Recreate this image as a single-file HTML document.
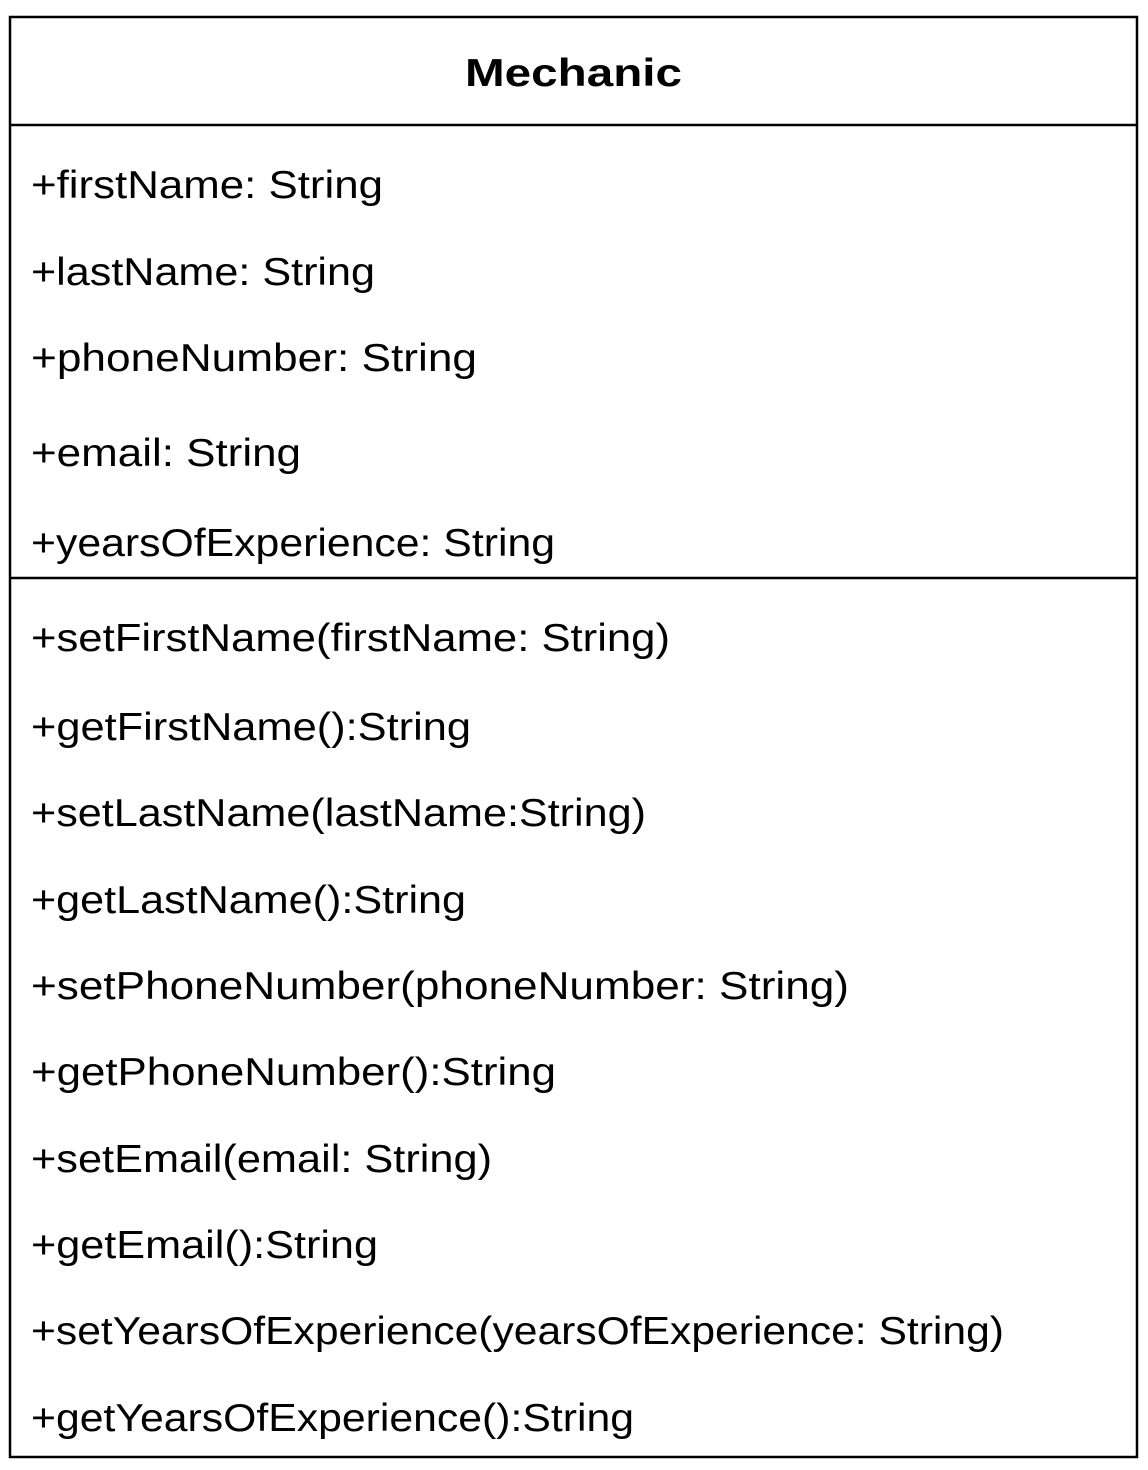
<!DOCTYPE html>
<html><head><meta charset="utf-8"><style>
html,body{margin:0;padding:0;background:#fff;}
svg{display:block}
text{font-family:"Liberation Sans",sans-serif;font-size:39px;fill:#000}
</style></head><body>
<svg width="1148" height="1470" viewBox="0 0 1148 1470" xmlns="http://www.w3.org/2000/svg">
<rect x="10" y="17" width="1127" height="1440" fill="none" stroke="#000" stroke-width="2.5"/>
<line x1="10" y1="125" x2="1137" y2="125" stroke="#000" stroke-width="2.5"/>
<line x1="10" y1="578" x2="1137" y2="578" stroke="#000" stroke-width="2.5"/>
<text x="465" y="86" font-weight="bold" textLength="217" lengthAdjust="spacingAndGlyphs">Mechanic</text>
<text x="31" y="198" textLength="352" lengthAdjust="spacingAndGlyphs">+firstName: String</text>
<text x="31" y="285" textLength="344" lengthAdjust="spacingAndGlyphs">+lastName: String</text>
<text x="31" y="371" textLength="446" lengthAdjust="spacingAndGlyphs">+phoneNumber: String</text>
<text x="31" y="466" textLength="270" lengthAdjust="spacingAndGlyphs">+email: String</text>
<text x="31" y="556" textLength="524" lengthAdjust="spacingAndGlyphs">+yearsOfExperience: String</text>
<text x="31" y="651" textLength="639" lengthAdjust="spacingAndGlyphs">+setFirstName(firstName: String)</text>
<text x="31" y="740" textLength="440" lengthAdjust="spacingAndGlyphs">+getFirstName():String</text>
<text x="31" y="826" textLength="615" lengthAdjust="spacingAndGlyphs">+setLastName(lastName:String)</text>
<text x="31" y="913" textLength="435" lengthAdjust="spacingAndGlyphs">+getLastName():String</text>
<text x="31" y="999" textLength="818" lengthAdjust="spacingAndGlyphs">+setPhoneNumber(phoneNumber: String)</text>
<text x="31" y="1085" textLength="525" lengthAdjust="spacingAndGlyphs">+getPhoneNumber():String</text>
<text x="31" y="1172" textLength="461" lengthAdjust="spacingAndGlyphs">+setEmail(email: String)</text>
<text x="31" y="1258" textLength="347" lengthAdjust="spacingAndGlyphs">+getEmail():String</text>
<text x="31" y="1344" textLength="973" lengthAdjust="spacingAndGlyphs">+setYearsOfExperience(yearsOfExperience: String)</text>
<text x="31" y="1431" textLength="603" lengthAdjust="spacingAndGlyphs">+getYearsOfExperience():String</text>
</svg>
</body></html>
